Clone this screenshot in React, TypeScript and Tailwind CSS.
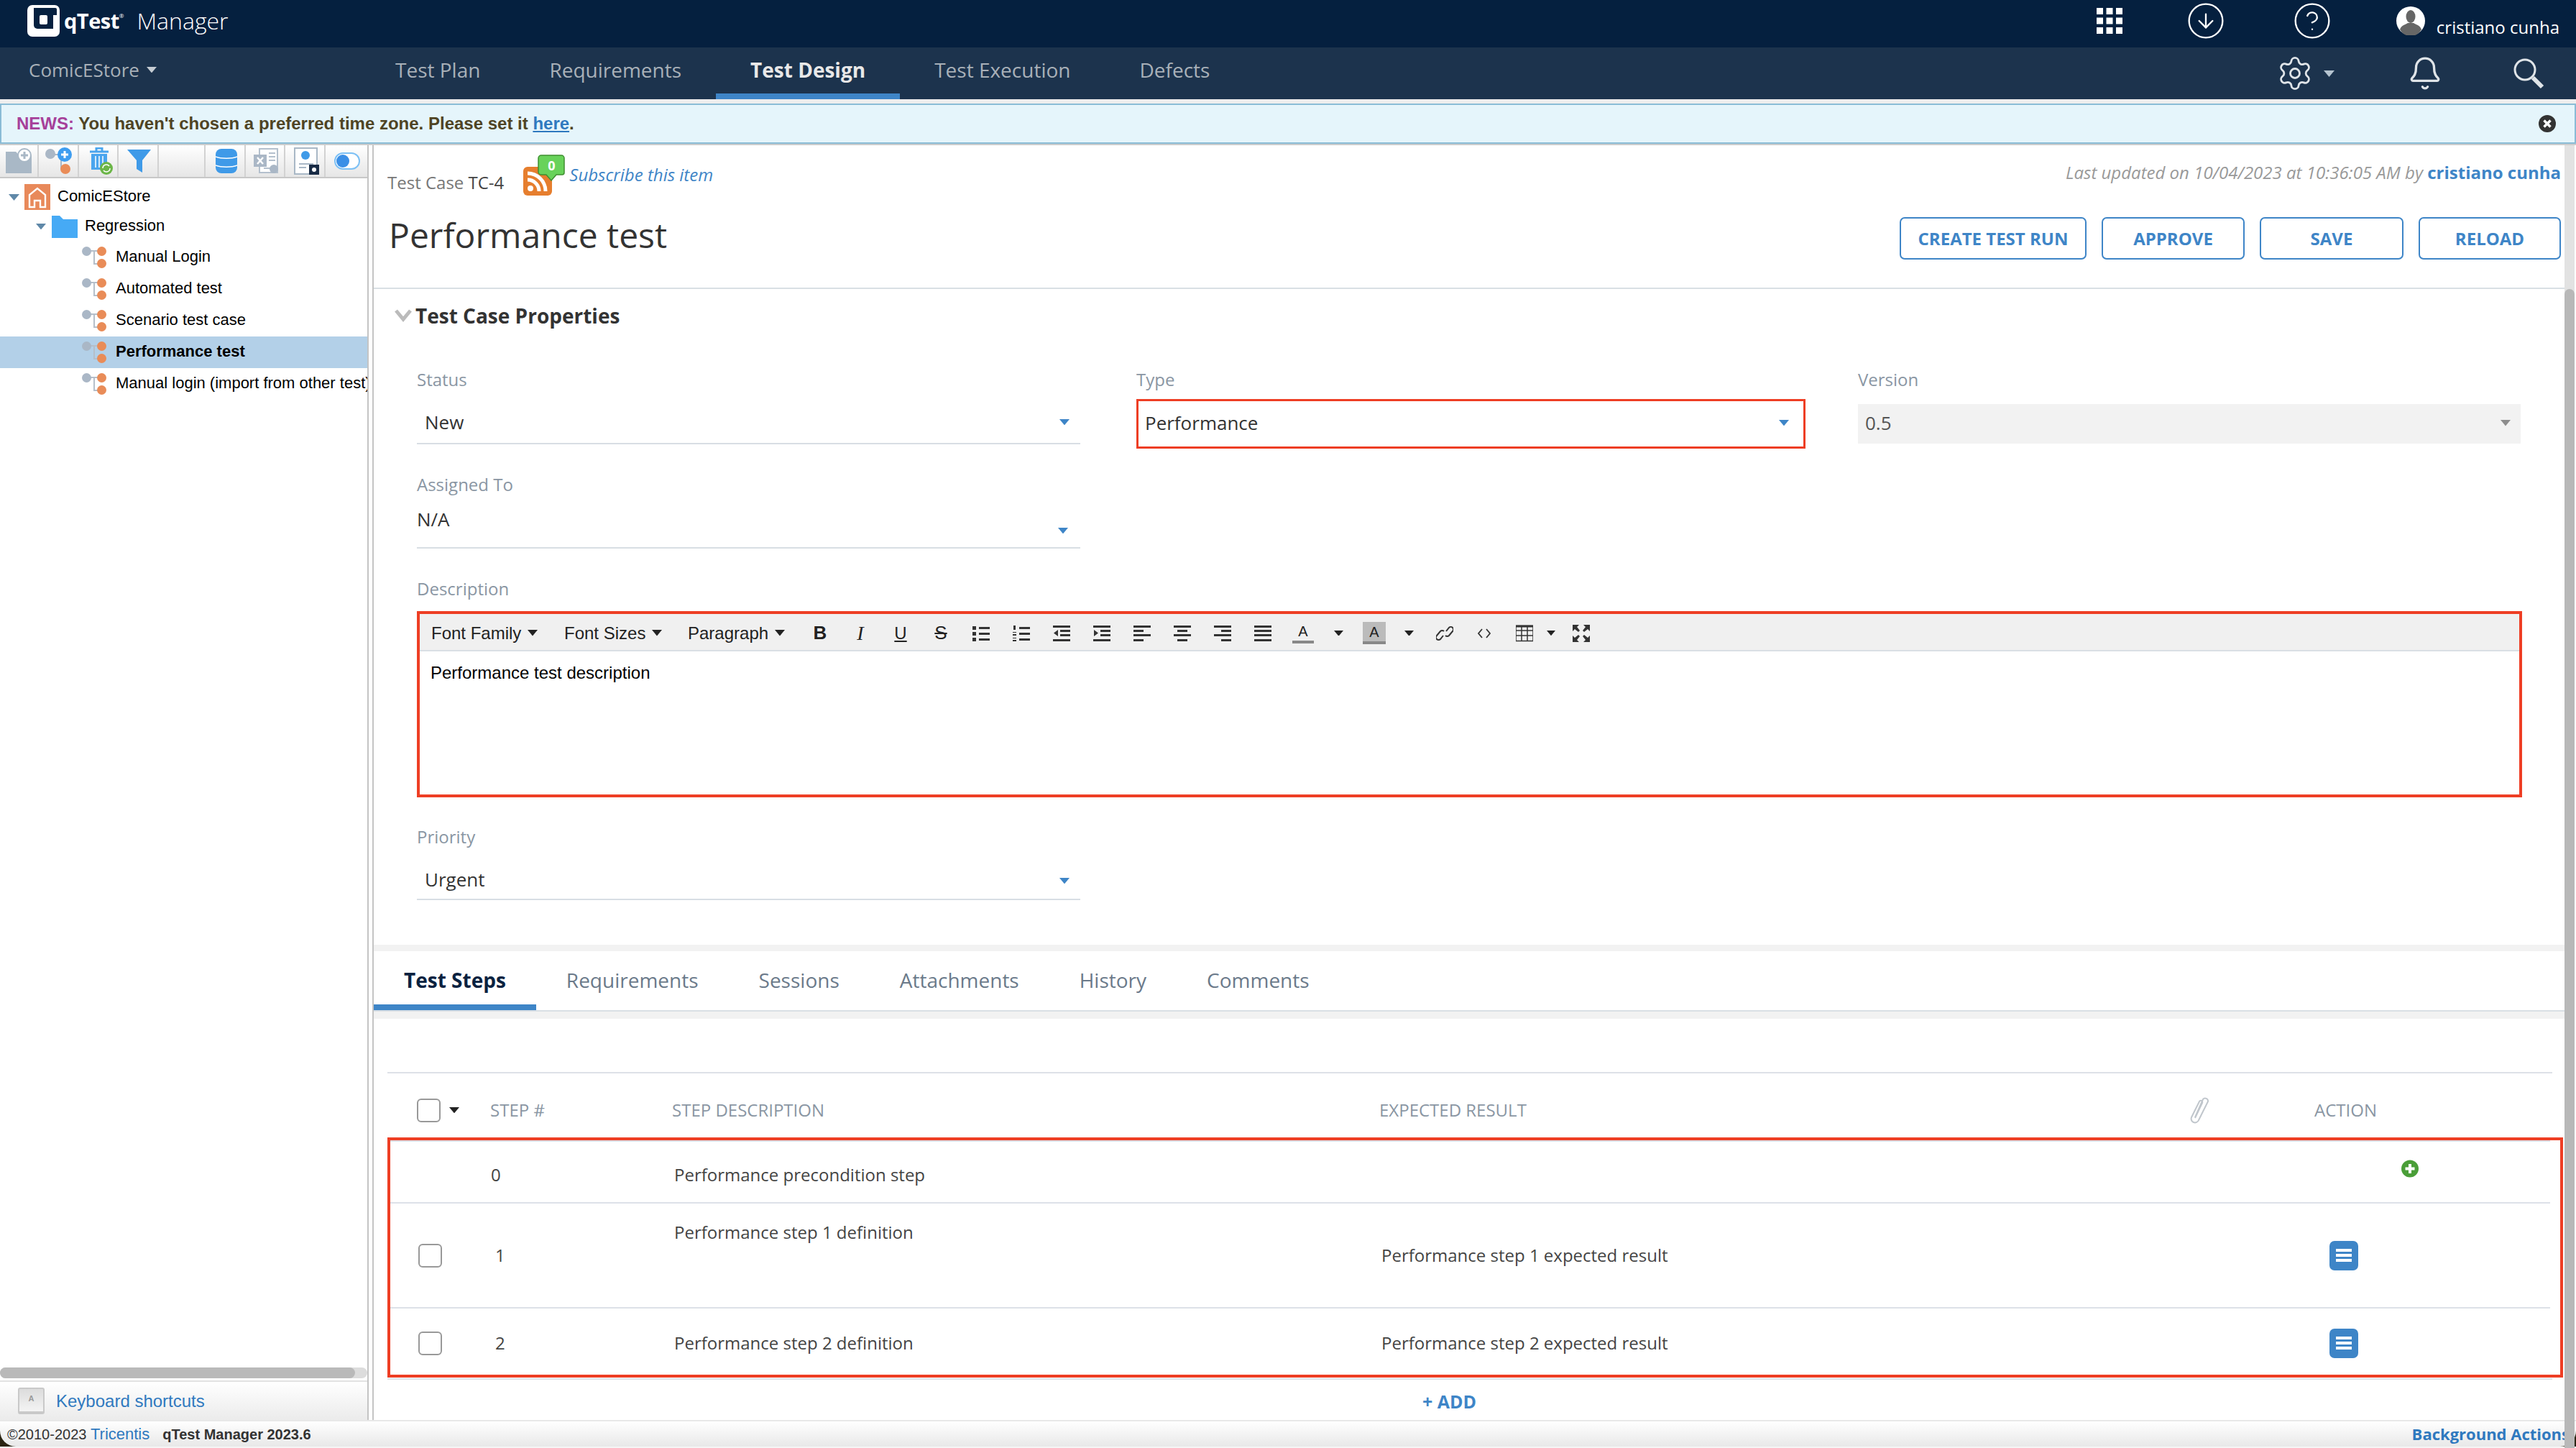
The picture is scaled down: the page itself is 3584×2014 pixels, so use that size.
import { CircleArrowDown, CircleHelp, Settings, Bell } from 'lucide-react'
import type { ReactNode } from 'react'

const TREE_CASES = ['Manual Login', 'Automated test', 'Scenario test case', 'Performance test', 'Manual login (import from other test)']
const NAV = ['Test Plan', 'Requirements', 'Test Design', 'Test Execution', 'Defects']
const TABS = ['Test Steps', 'Requirements', 'Sessions', 'Attachments', 'History', 'Comments']

function Caret({ size = 14, color = '#3e85c7' }: { size?: number; color?: string }) {
  return (
    <svg width={size} height={size * 0.6} viewBox="0 0 10 6" className="shrink-0">
      <path d="M0 0h10L5 6z" fill={color} />
    </svg>
  )
}

function Logo() {
  return (
    <svg width="45" height="44" viewBox="0 0 45 44">
      <rect width="45" height="44" rx="7" fill="#fff" />
      <path d="M9 4h30a2 2 0 0 1 2 2v27H14a5 5 0 0 1-5-5z" fill="#05203f" />
      <rect x="17" y="14" width="11" height="13" rx="2" fill="#fff" />
      <rect x="36" y="14" width="5" height="19" fill="#fff" />
    </svg>
  )
}

function Avatar() {
  return (
    <svg width="40" height="40" viewBox="0 0 40 40">
      <circle cx="20" cy="20" r="20" fill="#fff" />
      <ellipse cx="20" cy="14" rx="6.5" ry="9" fill="#666" />
      <path d="M5 32c2-6 8-7 11-9h8c3 2 9 3 11 9a17 17 0 0 1-30 0z" fill="#666" />
    </svg>
  )
}

function CaseIcon() {
  return (
    <svg width="34" height="30" viewBox="0 0 34 30" className="shrink-0">
      <path d="M12 6h10M17 6v18h6" stroke="#b5bfca" strokeWidth="2" fill="none" />
      <circle cx="6.5" cy="6.5" r="6.5" fill="#aab7c6" />
      <circle cx="27.5" cy="6.5" r="6.5" fill="#e98c58" />
      <circle cx="27.5" cy="23.5" r="6.5" fill="#e98c58" />
    </svg>
  )
}

function HomeIcon() {
  return (
    <svg width="36" height="36" viewBox="0 0 36 36" className="shrink-0">
      <rect width="36" height="36" fill="#e8895a" />
      <path d="M7 32V15L18 6l11 9v17h-7v-9h-8v9z" fill="none" stroke="#fff" strokeWidth="2.4" />
    </svg>
  )
}

function FolderIcon() {
  return (
    <svg width="36" height="31" viewBox="0 0 36 31" className="shrink-0">
      <path d="M0 0h11l5 5h20v26H0z" fill="#46aaf5" />
    </svg>
  )
}

function ToolCell({ children, w = 56, nudge = 0 }: { children?: ReactNode; w?: number; nudge?: number }) {
  return (
    <div className="flex h-full items-center justify-center border-r-2 border-[#d2d2d2]" style={{ width: w, paddingLeft: nudge }}>
      {children}
    </div>
  )
}

function TreeToolbar() {
  return (
    <div className="flex h-[46px] shrink-0 border-b-2 border-[#c8c8c8] bg-linear-to-b from-[#ffffff] to-[#e6e6e6]">
      <ToolCell w={54}>
        <svg width="38" height="36" viewBox="0 0 38 36">
          <path d="M1 5h14l6 6h16v24H1z" fill="#a9b8c6" />
          <circle cx="27" cy="10" r="9" fill="#fff" stroke="#a9b8c6" strokeWidth="2" />
          <path d="M27 5v10M22 10h10" stroke="#a9b8c6" strokeWidth="3" />
        </svg>
      </ToolCell>
      <ToolCell nudge={2}>
        <svg width="38" height="38" viewBox="0 0 38 38">
          <path d="M10 10h14M22 12v18h6" stroke="#aab7c6" strokeWidth="2" fill="none" />
          <circle cx="7" cy="9" r="7" fill="#aab7c6" />
          <circle cx="27" cy="10" r="10" fill="#3e9df0" />
          <path d="M27 5v10M22 10h10" stroke="#fff" strokeWidth="3" />
          <circle cx="28" cy="30" r="7" fill="#e98c58" />
        </svg>
      </ToolCell>
      <ToolCell nudge={7}>
        <svg width="34" height="38" viewBox="0 0 34 38">
          <path d="M2 6h26M11 5V1h8v4" stroke="#4aa5ee" strokeWidth="3" fill="none" />
          <path d="M4 9h22v22H4z" fill="#4aa5ee" />
          <path d="M10 12v16M15 12v16M20 12v16" stroke="#fff" strokeWidth="1.5" />
          <circle cx="25" cy="29" r="9" fill="#6cb648" />
          <path d="M20 29a5 5 0 0 1 9-3M30 29a5 5 0 0 1-9 3" stroke="#fff" strokeWidth="1.5" fill="none" />
        </svg>
      </ToolCell>
      <ToolCell nudge={4}>
        <svg width="34" height="34" viewBox="0 0 34 34">
          <path d="M0 1h33L21 16v17l-8-5V16z" fill="#3f9ae8" />
        </svg>
      </ToolCell>
      <ToolCell w={65} />
      <ToolCell nudge={4}>
        <svg width="30" height="36" viewBox="0 0 30 36">
          <rect y="1" width="30" height="34" rx="8" fill="#3f9ae8" />
          <path d="M0 12c8 3 22 3 30 0M0 24c8 3 22 3 30 0" stroke="#fff" strokeWidth="1.5" fill="none" />
        </svg>
      </ToolCell>
      <ToolCell nudge={5}>
        <svg width="36" height="36" viewBox="0 0 36 36">
          <path d="M8 1h25v33H8z" fill="#fff" stroke="#b4c0cd" strokeWidth="2" />
          <path d="M21 7h9M21 12h9M21 17h9M14 28h9" stroke="#b4c0cd" strokeWidth="2" />
          <rect y="9" width="18" height="17" fill="#aab7c6" />
          <path d="M5 13l8 9M13 13l-8 9" stroke="#fff" strokeWidth="2.5" />
          <circle cx="28" cy="29" r="6" fill="#aab7c6" />
        </svg>
      </ToolCell>
      <ToolCell nudge={5}>
        <svg width="36" height="38" viewBox="0 0 36 38">
          <rect x="1" y="1" width="31" height="36" fill="#fff" stroke="#a9b8c6" strokeWidth="2" />
          <circle cx="16" cy="11" r="6" fill="#3f9ae8" />
          <path d="M7 23h20M7 28h10" stroke="#a9b8c6" strokeWidth="2" />
          <rect x="21" y="24" width="14" height="14" fill="#182b45" />
          <circle cx="28" cy="31" r="3" fill="#fff" />
        </svg>
      </ToolCell>
      <div className="flex h-full w-[58px] items-center justify-center pl-[2px]">
        <svg width="36" height="24" viewBox="0 0 36 24">
          <rect x="1" y="1" width="34" height="22" rx="11" fill="#fff" stroke="#7cc0f5" strokeWidth="2" />
          <circle cx="12" cy="12" r="9" fill="#3b8fe6" />
        </svg>
      </div>
    </div>
  )
}

function Sidebar() {
  return (
    <aside className="flex h-full w-[511px] shrink-0 flex-col font-['Liberation_Sans',sans-serif] text-[22px] text-black">
      <TreeToolbar />
      <div className="flex-1 overflow-hidden pt-[6px]">
        <div className="flex h-[40px] items-center pl-[12px]">
          <Caret size={15} color="#5f88a8" />
          <span className="ml-[7px]"><HomeIcon /></span>
          <span className="mb-[3px] ml-[10px]">ComicEStore</span>
        </div>
        <div className="flex h-[42px] items-center pl-[50px]">
          <Caret size={14} color="#5f88a8" />
          <span className="ml-[8px]"><FolderIcon /></span>
          <span className="mb-[3px] ml-[10px]">Regression</span>
        </div>
        {TREE_CASES.map(name => {
          const selected = name === 'Performance test'
          return (
            <div key={name} className={`flex h-[44px] items-center overflow-hidden whitespace-nowrap pl-[114px] ${selected ? 'bg-[#b3d0e8] font-bold' : ''}`}>
              <CaseIcon />
              <span className="mb-[3px] ml-[13px]">{name}</span>
            </div>
          )
        })}
      </div>
      <div className="mb-[3px] h-[15px] shrink-0 rounded-full bg-[#dcdcdc]">
        <div className="h-full w-[494px] rounded-full bg-[#b9b9b9]" />
      </div>
      <div className="flex h-[55px] shrink-0 items-center border-t-2 border-[#e2e2e2] bg-linear-to-b from-[#ffffff] to-[#ebebeb] pl-[25px]">
        <div className="flex h-[37px] w-[37px] items-start justify-center rounded-[3px] border-b-4 border-x-2 border-t-2 border-[#c9c9c9] bg-linear-to-b from-[#dcdcdc] to-[#f4f4f4] pt-[5px] text-[11px] font-bold text-[#999]">A</div>
        <a className="ml-[16px] text-[24px] text-[#2f79bf]">Keyboard shortcuts</a>
      </div>
    </aside>
  )
}

function Field({ label, children }: { label: string; children: ReactNode }) {
  return (
    <div>
      <div className="flex h-[40px] items-center text-[24px] text-[#8a96a3]">{label}</div>
      {children}
    </div>
  )
}

function ListBars({ kind }: { kind: string }) {
  const bars: Record<string, string> = {
    ul: 'M9 3h15v3H9zM9 11h15v3H9zM9 19h15v3H9zM0 2h5v5H0zM0 10h5v5H0zM0 18h5v5H0z',
    ol: 'M9 3h15v3H9zM9 11h15v3H9zM9 19h15v3H9zM1 1h3v6H1zM0 10h5v1H0zM0 13h5v2H0zM0 18h5v1H0zM0 21h5v2H0z',
    out: 'M0 1h24v3H0zM10 7h14v3H10zM10 13h14v3H10zM0 20h24v3H0zM7 7v9l-6-4.500z',
    in: 'M0 1h24v3H0zM10 7h14v3H10zM10 13h14v3H10zM0 20h24v3H0zM1 7v9l6-4.500z',
    left: 'M0 1h24v3H0zM0 7h14v3H0zM0 13h24v3H0zM0 20h14v3H0z',
    center: 'M0 1h24v3H0zM5 7h14v3H5zM0 13h24v3H0zM5 20h14v3H5z',
    right: 'M0 1h24v3H0zM10 7h14v3H10zM0 13h24v3H0zM10 20h14v3H10z',
    just: 'M0 1h24v3H0zM0 7h24v3H0zM0 13h24v3H0zM0 20h24v3H0z',
  }
  return (
    <svg width="24" height="24" viewBox="0 0 24 24">
      <path d={bars[kind]} fill="#333" />
    </svg>
  )
}

function EdCell({ w = 56, children }: { w?: number; children: ReactNode }) {
  return (
    <div className="flex h-full shrink-0 items-center justify-center" style={{ width: w }}>
      {children}
    </div>
  )
}

function EditorToolbar() {
  return (
    <div className="flex h-[52px] items-center border-b-2 border-[#d9dfe4] bg-[#f0f0f0] pt-[3px] text-[24px] text-[#222]">
      <div className="flex w-[201px] items-center gap-[9px] pl-[16px]">Font Family <Caret size={14} color="#222" /></div>
      <div className="flex w-[172px] items-center gap-[9px]">Font Sizes <Caret size={14} color="#222" /></div>
      <div className="flex w-[156px] items-center gap-[9px]">Paragraph <Caret size={14} color="#222" /></div>
      <EdCell><b className="text-[26px]">B</b></EdCell>
      <EdCell><i className="font-['Liberation_Serif',serif] text-[28px]">I</i></EdCell>
      <EdCell><span className="text-[24px] underline">U</span></EdCell>
      <EdCell><span className="text-[26px] line-through">S</span></EdCell>
      <EdCell><ListBars kind="ul" /></EdCell>
      <EdCell><ListBars kind="ol" /></EdCell>
      <EdCell><ListBars kind="out" /></EdCell>
      <EdCell><ListBars kind="in" /></EdCell>
      <EdCell><ListBars kind="left" /></EdCell>
      <EdCell><ListBars kind="center" /></EdCell>
      <EdCell><ListBars kind="right" /></EdCell>
      <EdCell><ListBars kind="just" /></EdCell>
      <EdCell>
        <div className="flex w-[30px] flex-col items-center text-[20px] leading-[24px]">A<div className="mt-[1px] h-[4px] w-[30px] bg-[#888]" /></div>
      </EdCell>
      <EdCell w={43}><Caret size={13} color="#222" /></EdCell>
      <EdCell>
        <div className="flex w-[32px] flex-col items-center bg-[#bbb] pt-[2px] text-[20px] leading-[24px]">A<div className="mt-[1px] h-[4px] w-[32px] bg-[#888]" /></div>
      </EdCell>
      <EdCell w={40}><Caret size={13} color="#222" /></EdCell>
      <EdCell w={60}>
        <svg width="24" height="26" viewBox="0 0 24 26" fill="none" stroke="#333" strokeWidth="2">
          <path d="M10 16l-4 5a3.500 3.500 0 0 1-5-5l5-6a3.500 3.500 0 0 1 5 0" />
          <path d="M14 10l4-5a3.500 3.500 0 0 1 5 5l-5 6a3.500 3.500 0 0 1-5 0" />
        </svg>
      </EdCell>
      <EdCell w={50}>
        <svg width="20" height="14" viewBox="0 0 20 14" fill="none" stroke="#333" strokeWidth="1.800">
          <path d="M7 1L2 7l5 6M13 1l5 6-5 6" />
        </svg>
      </EdCell>
      <EdCell w={62}>
        <svg width="24" height="24" viewBox="0 0 24 24" fill="none" stroke="#333" strokeWidth="1.500">
          <path d="M0 1.500h24v21H0zM0 8h24M0 15h24M8 1.500v21M16 1.500v21" />
          <path d="M0 2h24" strokeWidth="3" />
        </svg>
      </EdCell>
      <EdCell w={12}><Caret size={12} color="#222" /></EdCell>
      <EdCell w={72}>
        <svg width="26" height="26" viewBox="0 0 26 26" fill="#333">
          <path d="M1 1h9L7 4l4 5-2 2-5-4-3 3zM25 1v9l-3-3-5 4-2-2 4-5-3-3zM1 25v-9l3 3 5-4 2 2-4 5 3 3zM25 25h-9l3-3-4-5 2-2 5 4 3-3z" />
        </svg>
      </EdCell>
    </div>
  )
}

function Properties() {
  return (
    <section className="pl-[60px]">
      <div className="flex h-[74px] items-center">
        <svg width="24" height="18" viewBox="0 0 24 18" className="ml-[-31px] shrink-0">
          <path d="M2 2l10 12L22 2" stroke="#bbb" strokeWidth="5" fill="none" />
        </svg>
        <h2 className="ml-[5px] text-[28px] font-bold text-[#333]">Test Case Properties</h2>
      </div>
      <div className="mt-[32px] flex items-start">
        <div className="w-[923px] shrink-0">
          <Field label="Status">
            <div className="mt-[10px] flex h-[60px] items-center justify-between border-b-2 border-[#d8dee4] pl-[11px] pr-[15px] text-[26px] text-[#333]">
              New <Caret />
            </div>
          </Field>
        </div>
        <div className="ml-[78px] w-[931px] shrink-0">
          <Field label="Type">
            <div className="mt-[7px] flex h-[69px] items-center justify-between border-[3px] border-[#ee3e24] pb-[3px] pl-[9px] pr-[20px] text-[26px] text-[#333]">
              Performance <Caret />
            </div>
          </Field>
        </div>
        <div className="ml-[73px] w-[922px] shrink-0">
          <Field label="Version">
            <div className="mt-[14px] flex h-[55px] items-center justify-between bg-[#f2f2f2] pb-[2px] pl-[10px] pr-[14px] text-[26px] text-[#555]">
              0.5 <Caret color="#8d8d8d" />
            </div>
          </Field>
        </div>
      </div>
      <div className="mt-[30px] w-[923px]">
        <Field label="Assigned To">
          <div className="flex h-[69px] items-start justify-between border-b-2 border-[#d8dee4] pr-[17px] pt-[12px] text-[26px] leading-[32px] text-[#333]">
            N/A <span className="mt-[28px]"><Caret /></span>
          </div>
        </Field>
      </div>
      <div className="mt-[36px]">
        <Field label="Description">
          <div className="mt-[11px] h-[259px] w-[2929px] border-4 border-[#ee3e24] font-['Liberation_Sans',sans-serif]">
            <EditorToolbar />
            <p className="pl-[15px] pt-[12px] text-[24px] text-black">Performance test description</p>
          </div>
        </Field>
      </div>
      <div className="mt-[35px] w-[923px]">
        <Field label="Priority">
          <div className="flex h-[68px] items-start justify-between border-b-2 border-[#d8dee4] pl-[11px] pr-[15px] pt-[23px] text-[26px] leading-[32px] text-[#333]">
            Urgent <span className="mt-[14px]"><Caret /></span>
          </div>
        </Field>
      </div>
    </section>
  )
}

function DetailButton() {
  return (
    <div className="flex h-[41px] w-[40px] items-center justify-center rounded-[7px] bg-[#3e85c7]">
      <svg width="22" height="22" viewBox="0 0 22 22">
        <path d="M0 2h22v4H0zM0 9h22v4H0zM0 16h22v4H0z" fill="#fff" />
      </svg>
    </div>
  )
}

function CheckBox() {
  return <div className="h-[33px] w-[33px] shrink-0 rounded-[6px] border-2 border-[#999] bg-white" />
}

function StepRow({ step, description, expected, height, topText = false }: { step: string; description: string; expected: string; height: number; topText?: boolean }) {
  return (
    <div className={`mr-[14px] flex items-center border-[#dde1e8] text-[24px] text-[#444] ${topText ? 'border-b-2' : 'pt-[4px]'}`} style={{ height }}>
      <div className="flex w-[140px] shrink-0 pl-[39px]"><CheckBox /></div>
      <div className="w-[255px] shrink-0 pl-[6px]">{step}</div>
      <div className={`w-[984px] shrink-0 ${topText ? 'mb-[64px]' : ''}`}>{description}</div>
      <div className="w-[1319px] shrink-0">{expected}</div>
      <DetailButton />
    </div>
  )
}

function StepsTable() {
  return (
    <section className="pl-[19px]">
      <div className="mr-[17px] mt-[74px] flex h-[91px] items-center border-t-2 border-[#dde1e8] pt-[13px] text-[24px] text-[#8a96a3]">
        <div className="flex w-[143px] shrink-0 items-center gap-[12px] pl-[41px]">
          <CheckBox />
          <Caret size={14} color="#222" />
        </div>
        <div className="w-[253px] shrink-0">STEP #</div>
        <div className="w-[984px] shrink-0">STEP DESCRIPTION</div>
        <div className="w-[1125px] shrink-0">EXPECTED RESULT</div>
        <svg width="32" height="40" viewBox="0 0 32 40" fill="none" stroke="#c0c6cc" strokeWidth="2" className="shrink-0">
          <path d="M10 30L21 5a4 4 0 0 1 7 3L15 34a5 5 0 0 1-10-4L16 8a2 2 0 0 1 4 2L10 31" />
        </svg>
        <div className="ml-[144px]">ACTION</div>
      </div>
      <div className="h-[334px] w-[3027px] border-4 border-[#ee3e24]">
        <div className="mr-[14px] flex h-[88px] items-center border-y-2 border-[#dde1e8] pt-[8px] text-[24px] text-[#444]">
          <div className="w-[140px] shrink-0" />
          <div className="w-[255px] shrink-0">0</div>
          <div className="w-[2403px] shrink-0">Performance precondition step</div>
          <svg width="24" height="25" viewBox="0 0 24 25" className="mb-[18px] shrink-0">
            <circle cx="12" cy="12.500" r="12" fill="#4a9e38" />
            <path d="M12 6v13M5.500 12.500h13" stroke="#fff" strokeWidth="4" />
          </svg>
        </div>
        <StepRow step="1" description="Performance step 1 definition" expected="Performance step 1 expected result" height={146} topText />
        <StepRow step="2" description="Performance step 2 definition" expected="Performance step 2 expected result" height={92} />
      </div>
      <div className="mr-[17px] mt-[1px] h-[2px] bg-[#dde1e8]" />
      <div className="flex h-[55px] items-center justify-center pr-[74px] pt-[6px] text-[25px] font-bold text-[#3e85c7]">+ ADD</div>
    </section>
  )
}

function Main() {
  return (
    <main className="relative flex h-full min-w-0 flex-1 font-['Open_Sans',sans-serif]">
      <div className="w-[3048px] shrink-0 overflow-hidden">
        <header className="flex h-[200px] justify-between border-b-2 border-[#d9dfe4] pl-[19px] pr-[5px]">
          <div>
            <div className="flex h-[76px] items-end pb-[6px]">
              <span className="text-[24px] text-[#777]">Test Case <span className="text-[#444]">TC-4</span></span>
              <div className="relative ml-[27px] h-[40px] w-[40px] rounded-[6px] bg-[#e67e2e]">
                <svg width="40" height="40" viewBox="0 0 40 40" className="absolute left-0 top-0">
                  <circle cx="10" cy="30" r="4" fill="#fff" />
                  <path d="M6 18a16 16 0 0 1 16 16M6 9a25 25 0 0 1 25 25" stroke="#fff" strokeWidth="5" fill="none" />
                </svg>
                <svg width="38" height="37" viewBox="0 0 38 37" className="absolute left-[20px] top-[-17px]">
                  <path d="M5 1h28a4 4 0 0 1 4 4v20a3 3 0 0 1-3 3h-8l-7 8-7-8H5a4 4 0 0 1-4-4V5a4 4 0 0 1 4-4z" fill="#68d25a" stroke="#3f8f31" strokeWidth="1.500" />
                </svg>
                <span className="absolute left-[20px] top-[-15px] w-[38px] text-center text-[18px] font-bold leading-[26px] text-white">0</span>
              </div>
              <a className="mb-[11px] ml-[24px] text-[24px] italic text-[#3e85c7]">Subscribe this item</a>
            </div>
            <h1 className="ml-[2px] mt-[16px] text-[48px] leading-[66px] text-[#333]">Performance test</h1>
          </div>
          <div className="flex flex-col items-end">
            <p className="mt-[20px] h-[36px] text-[24px] leading-[36px] text-[#999]">
              <i>Last updated on 10/04/2023 at 10:36:05 AM by </i>
              <b className="text-[#3e85c7]">cristiano cunha</b>
            </p>
            <div className="mt-[44px] flex gap-[21px] text-[24px] font-bold text-[#3e85c7]">
              <button className="h-[59px] w-[260px] rounded-[7px] border-2 border-[#3e85c7]">CREATE TEST RUN</button>
              <button className="h-[59px] w-[199px] rounded-[7px] border-2 border-[#3e85c7]">APPROVE</button>
              <button className="h-[59px] w-[200px] rounded-[7px] border-2 border-[#3e85c7]">SAVE</button>
              <button className="h-[59px] w-[198px] rounded-[7px] border-2 border-[#3e85c7]">RELOAD</button>
            </div>
          </div>
        </header>
        <Properties />
        <div className="mt-[62px] h-[9px] bg-[#f2f2f2]" />
        <div className="flex h-[84px] border-b-2 border-[#d9dfe4] text-[28px] text-[#6b7a8a]">
          {TABS.map(tab => (
            <div key={tab} className={`flex h-[82px] items-center border-b-8 px-[42px] pt-[6px] ${tab === 'Test Steps' ? 'border-[#3e85c7] font-bold text-[#0a2240]' : 'border-transparent'}`}>
              {tab}
            </div>
          ))}
        </div>
        <div className="h-[10px] bg-[#f2f2f2]" />
        <StepsTable />
      </div>
      <div className="h-full w-[14px] shrink-0 bg-[#e2e2e2]">
        <div className="mt-[200px] h-[1654px] rounded-full bg-[#b8b8b8]" />
      </div>
    </main>
  )
}

export default function App() {
  return (
    <div className="flex h-[2014px] w-[3584px] flex-col overflow-hidden bg-white">
      <div className="flex h-[66px] shrink-0 items-center bg-[#05203f] pb-[8px] font-['Open_Sans',sans-serif] text-white">
        <div className="ml-[38px]"><Logo /></div>
        <span className="ml-[6px] text-[29px] font-bold tracking-[-0.5px]">qTest</span>
        <span className="mb-[14px] text-[8px]">®</span>
        <span className="ml-[18px] text-[32px] font-light">Manager</span>
        <div className="ml-auto flex items-center">
          <svg width="36" height="36" viewBox="0 0 36 36" className="mr-[88px]">
            <path d="M0 0h9v9H0zM13.500 0h9v9h-9zM27 0h9v9h-9zM0 13.500h9v9H0zM13.500 13.500h9v9h-9zM27 13.500h9v9h-9zM0 27h9v9H0zM13.500 27h9v9h-9zM27 27h9v9h-9z" fill="#fff" />
          </svg>
          <CircleArrowDown size={56} strokeWidth={1} className="mr-[92px]" />
          <CircleHelp size={56} strokeWidth={1} className="mr-[89px]" />
          <Avatar />
          <span className="ml-[16px] mr-[23px] mt-[18px] text-[24px]">cristiano cunha</span>
        </div>
      </div>
      <nav className="flex h-[72px] shrink-0 items-center bg-[#1c334d] pl-[40px] font-['Open_Sans',sans-serif] text-[28px] text-[#a8b0b8]">
        <div className="flex h-full w-[462px] items-center gap-[10px] pb-[10px] text-[26px]">
          ComicEStore <Caret size={14} color="#c5ccd3" />
        </div>
        {NAV.map(item => (
          <div key={item} className={`flex h-full items-center border-b-8 px-[48px] pb-[2px] ${item === 'Test Design' ? 'border-[#3e85c7] font-bold text-[#e8e8e8]' : 'border-transparent'}`}>
            {item}
          </div>
        ))}
        <div className="ml-auto flex items-center text-[#dfe4e8]">
          <Settings size={52} strokeWidth={1.3} />
          <span className="ml-[14px]"><Caret size={15} color="#b5c4d0" /></span>
          <Bell size={50} strokeWidth={1.6} className="ml-[101px]" />
          <svg width="44" height="44" viewBox="0 0 44 44" fill="none" stroke="#dfe4e8" className="ml-[97px] mr-[44px]">
            <circle cx="17" cy="17" r="14" strokeWidth="3" />
            <path d="M28 28l13 13" strokeWidth="6" />
          </svg>
        </div>
      </nav>
      <div className="h-[6px] shrink-0 bg-[#eeeeee]" />
      <div className="flex h-[56px] shrink-0 items-center justify-between border-2 border-[#8abcd6] bg-[#e5f5fb] pl-[21px] pr-[26px] font-['Liberation_Sans',sans-serif] text-[24px] font-bold text-[#4f4424]">
        <p>
          <span className="text-[#a6409a]">NEWS:</span> You haven't chosen a preferred time zone. Please set it <a className="text-[#2f79bf] underline">here</a>.
        </p>
        <svg width="24" height="24" viewBox="0 0 24 24">
          <circle cx="12" cy="12" r="12" fill="#333" />
          <path d="M7.500 7.500l9 9M16.500 7.500l-9 9" stroke="#fff" strokeWidth="3.500" />
        </svg>
      </div>
      <div className="h-[2px] shrink-0 bg-[#cccccc]" />
      <div className="flex min-h-0 flex-1">
        <Sidebar />
        <div className="h-full w-[9px] shrink-0 border-x-2 border-x-[#c4c4c4] bg-white" />
        <Main />
      </div>
      <div className="h-[37px] shrink-0 bg-[#2b2412]">
        <div className="flex h-full items-center justify-between rounded-b-[22px] border-t-2 border-[#e8e8e8] bg-linear-to-b from-[#ffffff] to-[#e8e8e8] pl-[10px] pr-[9px] text-[20px]">
          <p className="font-['Liberation_Sans',sans-serif] text-[#333]">
            ©2010-2023 <a className="text-[22px] text-[#2f79bf]">Tricentis</a>
            <b className="ml-[18px]">qTest Manager 2023.6</b>
          </p>
          <a className="font-['Open_Sans',sans-serif] text-[22px] font-bold text-[#2f79bf]">Background Actions</a>
        </div>
      </div>
      <div className="h-[2px] shrink-0 bg-[#f5f5f5]" />
    </div>
  )
}
